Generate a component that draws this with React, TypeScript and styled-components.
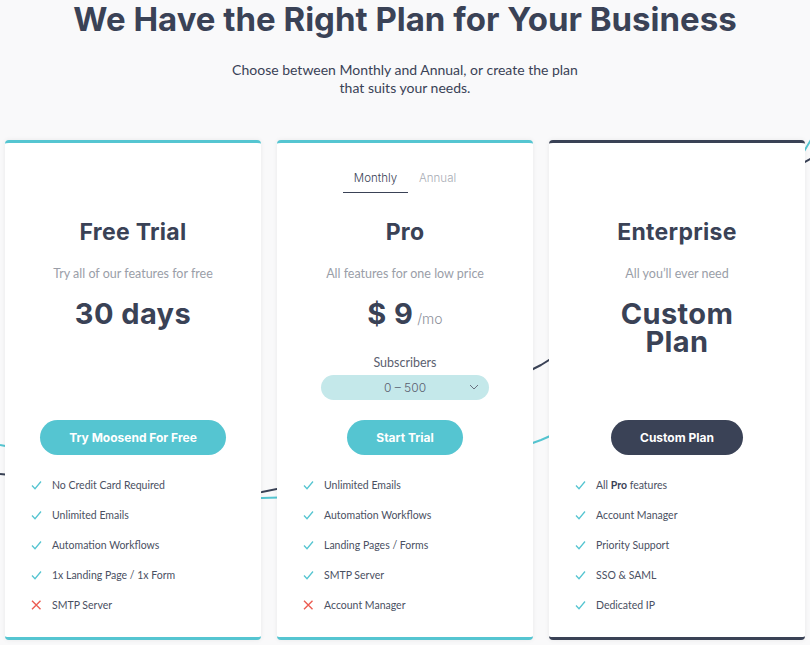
import React from 'react';
import styled, { createGlobalStyle } from 'styled-components';

const teal = '#55c5d1';
const dark = '#3a4256';

const GlobalStyle = createGlobalStyle`
	html, body {
		margin: 0;
		padding: 0;
		background: #f9f9fa;
	}
	* {
		box-sizing: border-box;
	}
`;

const Page = styled.div`
	position: relative;
	width: 810px;
	height: 645px;
	overflow: hidden;
	background: #f9f9fa;
	color: ${dark};
`;

const Title = styled.h1`
	margin: -3px 0 0;
	font-family: Inter, 'Open Sans', sans-serif;
	font-weight: 700;
	font-size: 33px;
	line-height: 44px;
	text-align: center;
	color: ${dark};
`;

const Lead = styled.p`
	margin: 20px auto 0;
	width: 380px;
	font-family: Lato, 'Noto Sans', sans-serif;
	font-size: 14px;
	line-height: 18px;
	text-align: center;
	color: ${dark};
`;

const Lines = styled.svg`
	position: absolute;
	left: 0;
	top: 0;
	width: 810px;
	height: 645px;
	pointer-events: none;
`;

const Cards = styled.div`
	position: relative;
	display: grid;
	grid-template-columns: repeat(3, 256px);
	gap: 16px;
	justify-content: center;
	margin-top: 43px;
`;

const Card = styled.div<{ $accent: string }>`
	height: 500px;
	display: flex;
	flex-direction: column;
	align-items: center;
	background: #fff;
	border-top: 3px solid ${(p) => p.$accent};
	border-bottom: 3px solid ${(p) => p.$accent};
	border-radius: 4px;
	box-shadow: 0 0 5px rgba(0, 0, 0, 0.07);
`;

const Head = styled.div`
	height: 277px;
	width: 100%;
	display: flex;
	flex-direction: column;
	align-items: center;
	padding-top: 22px;
`;

const TabBar = styled.div`
	height: 28px;
	display: flex;
`;

const Tab = styled.div<{ $active?: boolean }>`
	padding: 5px 11px 6px;
	font-family: Inter, 'Open Sans', sans-serif;
	font-weight: 300;
	font-size: 11.5px;
	line-height: 16px;
	color: ${(p) => (p.$active ? dark : '#a9adb5')};
	border-bottom: 1.5px solid ${(p) => (p.$active ? dark : 'transparent')};
`;

const PlanName = styled.h2`
	margin: 25px 0 0;
	font-family: Inter, 'Open Sans', sans-serif;
	font-weight: 700;
	font-size: 23px;
	letter-spacing: 0.3px;
	line-height: 28px;
	color: ${dark};
`;

const Tagline = styled.p`
	margin: 20px 0 0;
	font-family: Lato, 'Noto Sans', sans-serif;
	font-size: 12.5px;
	line-height: 16px;
	color: #9a9ea8;
`;

const Price = styled.div`
	margin-top: 18px;
	font-family: Inter, 'Open Sans', sans-serif;
	font-weight: 700;
	font-size: 29px;
	letter-spacing: 0.4px;
	line-height: 28px;
	text-align: center;
	color: ${dark};
`;

const Per = styled.span`
	margin-left: 4px;
	font-weight: 300;
	font-size: 14px;
	letter-spacing: 0;
	color: #8d919c;
`;

const Subscribers = styled.div`
	margin-top: auto;
	padding-bottom: 20px;
	display: flex;
	flex-direction: column;
	align-items: center;
	gap: 4px;
`;

const Label = styled.div`
	font-family: Lato, 'Noto Sans', sans-serif;
	font-size: 12.5px;
	line-height: 16px;
	color: #5a6070;
`;

const Select = styled.div`
	position: relative;
	width: 168px;
	height: 25px;
	border-radius: 13px;
	background: #c4e8ea;
	display: flex;
	align-items: center;
	justify-content: center;
	font-family: Inter, 'Open Sans', sans-serif;
	font-weight: 300;
	font-size: 12px;
	color: #5a6070;
`;

const Chevron = styled.svg`
	position: absolute;
	right: 10px;
	top: 9px;
`;

const Button = styled.button<{ $bg: string }>`
	height: 35px;
	padding: 0 29px;
	border: none;
	border-radius: 18px;
	background: ${(p) => p.$bg};
	color: #fff;
	font-family: Inter, 'Open Sans', sans-serif;
	font-weight: 700;
	font-size: 12px;
	cursor: pointer;
`;

const Features = styled.ul`
	list-style: none;
	margin: 15px 0 0;
	padding: 0 0 0 26px;
	align-self: stretch;
`;

const Feature = styled.li`
	height: 30px;
	display: flex;
	align-items: center;
	gap: 10px;
	font-family: Lato, 'Noto Sans', sans-serif;
	font-size: 10.5px;
	color: #4a5062;
	b {
		font-weight: 700;
		color: ${dark};
	}
`;

const Check = () => (
	<svg width="11" height="10" viewBox="0 0 11 10">
		<polyline points="1,5.5 4,8.7 10,1.5" fill="none" stroke={teal} strokeWidth="1.3" />
	</svg>
);

const Cross = () => (
	<svg width="11" height="10" viewBox="0 0 11 10">
		<path d="M1 0.8 L9.5 9.2 M9.5 0.8 L1 9.2" fill="none" stroke="#ec5c52" strokeWidth="1.4" />
	</svg>
);

type Item = { text: React.ReactNode; ok: boolean };

const FeatureList = ({ items }: { items: Item[] }) => (
	<Features>
		{items.map((it, i) => (
			<Feature key={i}>
				{it.ok ? <Check /> : <Cross />}
				<span>{it.text}</span>
			</Feature>
		))}
	</Features>
);

export default function App() {
	return (
		<Page>
			<GlobalStyle />
			<Lines viewBox="0 0 810 645">
				<path
					d="M0 445 C 90 460 190 500 262 498 C 360 496 460 470 541 440 C 640 400 740 260 812 138"
					fill="none"
					stroke={teal}
					strokeWidth="2"
				/>
				<path
					d="M0 474 C 100 482 190 496 262 492 C 380 470 470 400 541 365 C 650 300 730 200 812 158"
					fill="none"
					stroke={dark}
					strokeWidth="2"
				/>
			</Lines>
			<Title>We Have the Right Plan for Your Business</Title>
			<Lead>
				Choose between Monthly and Annual, or create the plan
				<br />
				that suits your needs.
			</Lead>
			<Cards>
				<Card $accent={teal}>
					<Head>
						<TabBar />
						<PlanName>Free Trial</PlanName>
						<Tagline>Try all of our features for free</Tagline>
						<Price>30 days</Price>
					</Head>
					<Button $bg={teal}>Try Moosend For Free</Button>
					<FeatureList
						items={[
							{ text: 'No Credit Card Required', ok: true },
							{ text: 'Unlimited Emails', ok: true },
							{ text: 'Automation Workflows', ok: true },
							{ text: '1x Landing Page / 1x Form', ok: true },
							{ text: 'SMTP Server', ok: false },
						]}
					/>
				</Card>
				<Card $accent={teal}>
					<Head>
						<TabBar>
							<Tab $active>Monthly</Tab>
							<Tab>Annual</Tab>
						</TabBar>
						<PlanName>Pro</PlanName>
						<Tagline>All features for one low price</Tagline>
						<Price>
							$ 9<Per>/mo</Per>
						</Price>
						<Subscribers>
							<Label>Subscribers</Label>
							<Select>
								0 – 500
								<Chevron width="10" height="7" viewBox="0 0 10 7">
									<polyline points="1,1 5,5 9,1" fill="none" stroke="#6a7080" strokeWidth="1" />
								</Chevron>
							</Select>
						</Subscribers>
					</Head>
					<Button $bg={teal}>Start Trial</Button>
					<FeatureList
						items={[
							{ text: 'Unlimited Emails', ok: true },
							{ text: 'Automation Workflows', ok: true },
							{ text: 'Landing Pages / Forms', ok: true },
							{ text: 'SMTP Server', ok: true },
							{ text: 'Account Manager', ok: false },
						]}
					/>
				</Card>
				<Card $accent={dark}>
					<Head>
						<TabBar />
						<PlanName>Enterprise</PlanName>
						<Tagline>All you’ll ever need</Tagline>
						<Price>
							Custom
							<br />
							Plan
						</Price>
					</Head>
					<Button $bg={dark}>Custom Plan</Button>
					<FeatureList
						items={[
							{
								text: (
									<>
										All <b>Pro</b> features
									</>
								),
								ok: true,
							},
							{ text: 'Account Manager', ok: true },
							{ text: 'Priority Support', ok: true },
							{ text: 'SSO & SAML', ok: true },
							{ text: 'Dedicated IP', ok: true },
						]}
					/>
				</Card>
			</Cards>
		</Page>
	);
}
